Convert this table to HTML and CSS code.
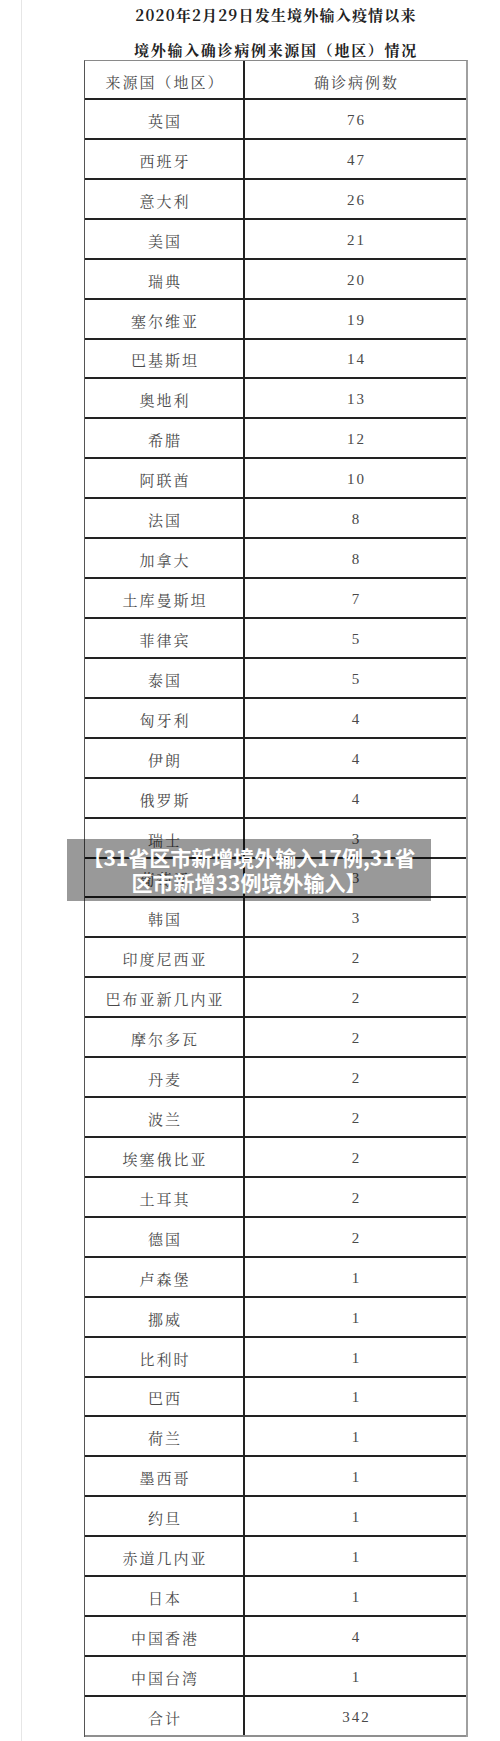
FILE: index.html
```html
<!DOCTYPE html>
<html lang="zh-CN">
<head>
<meta charset="utf-8">
<title>境外输入确诊病例来源国（地区）情况</title>
<link rel="stylesheet" href="styles.css">
</head>
<body>
<div class="page">
  <div class="doc">
    <h1 class="title">2020年2月29日发生境外输入疫情以来</h1>
    <h2 class="title sub">境外输入确诊病例来源国（地区）情况</h2>
    <div class="table">
      <div class="row head"><div class="c1">来源国（地区）</div><div class="c2">确诊病例数</div></div>
      <div class="row"><div class="c1">英国</div><div class="c2">76</div></div>
      <div class="row"><div class="c1">西班牙</div><div class="c2">47</div></div>
      <div class="row"><div class="c1">意大利</div><div class="c2">26</div></div>
      <div class="row"><div class="c1">美国</div><div class="c2">21</div></div>
      <div class="row"><div class="c1">瑞典</div><div class="c2">20</div></div>
      <div class="row"><div class="c1">塞尔维亚</div><div class="c2">19</div></div>
      <div class="row"><div class="c1">巴基斯坦</div><div class="c2">14</div></div>
      <div class="row"><div class="c1">奥地利</div><div class="c2">13</div></div>
      <div class="row"><div class="c1">希腊</div><div class="c2">12</div></div>
      <div class="row"><div class="c1">阿联酋</div><div class="c2">10</div></div>
      <div class="row"><div class="c1">法国</div><div class="c2">8</div></div>
      <div class="row"><div class="c1">加拿大</div><div class="c2">8</div></div>
      <div class="row"><div class="c1">土库曼斯坦</div><div class="c2">7</div></div>
      <div class="row"><div class="c1">菲律宾</div><div class="c2">5</div></div>
      <div class="row"><div class="c1">泰国</div><div class="c2">5</div></div>
      <div class="row"><div class="c1">匈牙利</div><div class="c2">4</div></div>
      <div class="row"><div class="c1">伊朗</div><div class="c2">4</div></div>
      <div class="row"><div class="c1">俄罗斯</div><div class="c2">4</div></div>
      <div class="row"><div class="c1">瑞士</div><div class="c2">3</div></div>
      <div class="row"><div class="c1">葡萄牙</div><div class="c2">3</div></div>
      <div class="row"><div class="c1">韩国</div><div class="c2">3</div></div>
      <div class="row"><div class="c1">印度尼西亚</div><div class="c2">2</div></div>
      <div class="row"><div class="c1">巴布亚新几内亚</div><div class="c2">2</div></div>
      <div class="row"><div class="c1">摩尔多瓦</div><div class="c2">2</div></div>
      <div class="row"><div class="c1">丹麦</div><div class="c2">2</div></div>
      <div class="row"><div class="c1">波兰</div><div class="c2">2</div></div>
      <div class="row"><div class="c1">埃塞俄比亚</div><div class="c2">2</div></div>
      <div class="row"><div class="c1">土耳其</div><div class="c2">2</div></div>
      <div class="row"><div class="c1">德国</div><div class="c2">2</div></div>
      <div class="row"><div class="c1">卢森堡</div><div class="c2">1</div></div>
      <div class="row"><div class="c1">挪威</div><div class="c2">1</div></div>
      <div class="row"><div class="c1">比利时</div><div class="c2">1</div></div>
      <div class="row"><div class="c1">巴西</div><div class="c2">1</div></div>
      <div class="row"><div class="c1">荷兰</div><div class="c2">1</div></div>
      <div class="row"><div class="c1">墨西哥</div><div class="c2">1</div></div>
      <div class="row"><div class="c1">约旦</div><div class="c2">1</div></div>
      <div class="row"><div class="c1">赤道几内亚</div><div class="c2">1</div></div>
      <div class="row"><div class="c1">日本</div><div class="c2">1</div></div>
      <div class="row"><div class="c1">中国香港</div><div class="c2">4</div></div>
      <div class="row"><div class="c1">中国台湾</div><div class="c2">1</div></div>
      <div class="row last"><div class="c1">合计</div><div class="c2">342</div></div>
    </div>
  </div>
  <div class="caption">【31省区市新增境外输入17例,31省区市新增33例境外输入】</div>
</div>
</body>
</html>
```
FILE: styles.css
```css
html, body {
  margin: 0;
  padding: 0;
  background: #ffffff;
}

.page {
  position: relative;
  margin-left: 21px;
  height: 1741px;
  border-left: 1px solid #e6e6e6;
  box-sizing: border-box;
}

.doc {
  width: 384px;
  margin-left: 62px;
  padding-top: 5px;
}

.title {
  margin: 0;
  height: 19px;
  font-family: "Noto Serif CJK SC", "Liberation Serif", "Noto Sans CJK SC", serif;
  font-size: 15px;
  font-weight: 700;
  line-height: 19px;
  color: #222;
  text-align: center;
  letter-spacing: 1.2px;
  white-space: nowrap;
}

.title.sub {
  margin-top: 16px;
  letter-spacing: 1.7px;
}

.table {
  margin-top: 1px;
  border-top: 1px solid #8a8a8a;
  border-left: 1px solid #555;
  border-right: 2px solid #a0a0a0;
}

.row {
  display: grid;
  grid-template-columns: 160px 1fr;
  height: 39.93px;
  box-sizing: border-box;
  border-bottom: 2px solid #222;
}

.row.head {
  height: 39px;
}

.row.last {
  border-bottom-color: #8f8f8f;
}

.c1, .c2 {
  display: flex;
  align-items: center;
  justify-content: center;
  padding-top: 3px;
  padding-left: 2px;
  font-family: "Liberation Serif", "Noto Serif CJK SC", "Noto Sans CJK SC", serif;
  font-size: 15px;
  letter-spacing: 2px;
  color: #4a4a4a;
  white-space: nowrap;
}

.c1 {
  border-right: 2px solid #222;
}

.caption {
  position: absolute;
  left: 45px;
  top: 839px;
  width: 364px;
  box-sizing: border-box;
  padding: 6px 6px;
  background: rgba(0, 0, 0, 0.4);
  color: #ffffff;
  font-family: "Noto Sans CJK SC", "Noto Sans", sans-serif;
  font-size: 21px;
  font-weight: 700;
  line-height: 25px;
  text-align: center;
}
```
